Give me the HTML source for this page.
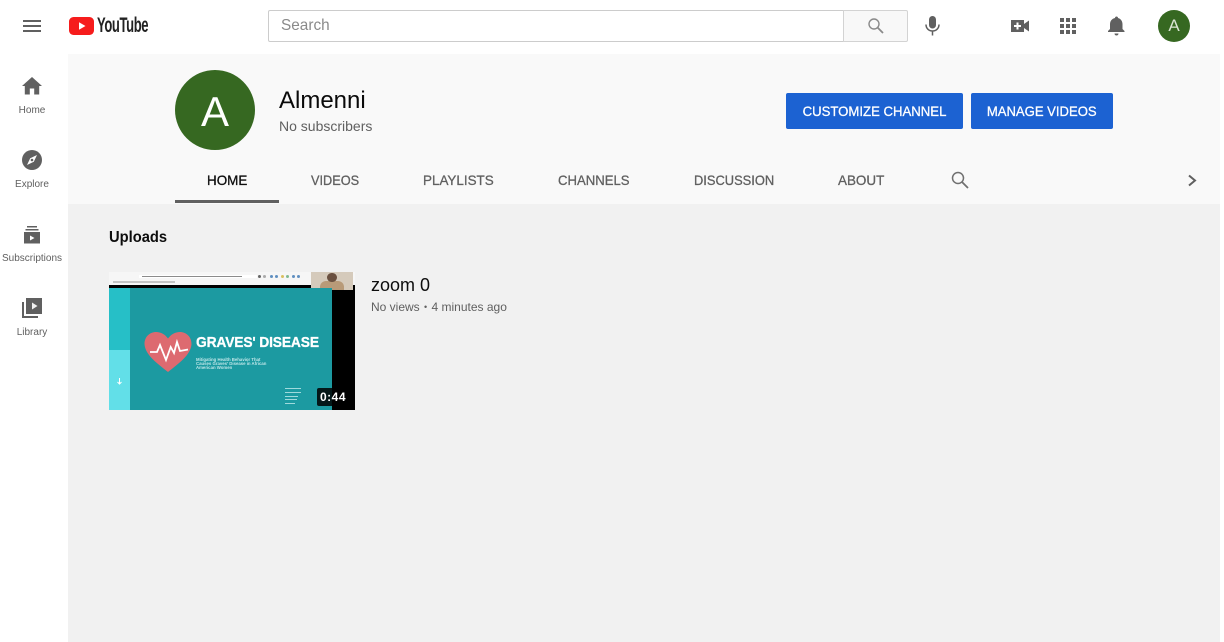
<!DOCTYPE html>
<html><head><meta charset="utf-8"><style>
html,body{margin:0;padding:0;width:1224px;height:642px;overflow:hidden;background:#fff;font-family:"Liberation Sans",sans-serif}
.a{position:absolute;white-space:nowrap}
svg{position:absolute;overflow:visible}
.side{color:#606060;font-size:10px;width:64px;left:0;text-align:center}
.tab{top:172px;font-size:14px;line-height:16px;color:#606060;-webkit-text-stroke:.3px currentColor;transform-origin:0 0}
.btn{background:#1c62d2;color:#fff;font-size:14px;height:36px;line-height:36px;top:93px;text-align:center;border-radius:2px}
.btn span{display:inline-block;-webkit-text-stroke:.3px #fff}
.dot{top:3px;width:3px;height:3px;border-radius:50%}
</style></head><body>
<div class="a" style="left:68px;top:54px;width:1152px;height:150px;background:#f9f9f9"></div>
<div class="a" style="left:68px;top:204px;width:1152px;height:438px;background:#f1f1f1"></div>

<svg style="left:23px;top:20px" width="18" height="12"><path d="M0 0h18v2H0zM0 5h18v2H0zM0 10h18v2H0z" fill="#606060"/></svg>
<svg style="left:69px;top:17px" width="25" height="18" viewBox="0 0 25 18"><rect width="25" height="18" rx="4.500" fill="#f61c1c"/><path d="M10 5.200L16.500 9 10 12.800z" fill="#fff"/></svg>
<div class="a" style="left:97px;top:14px;font-size:21px;line-height:24px;color:#222;font-weight:bold;transform:scaleX(.62);transform-origin:0 0;letter-spacing:-.6px">YouTube</div>

<div class="a" style="left:268px;top:10px;width:576px;height:32px;box-sizing:border-box;border:1px solid #ccc;border-radius:2px 0 0 2px;background:#fff"></div>
<div class="a" style="left:281px;top:16px;font-size:16px;line-height:20px;color:#8a8a8a;transform:scaleX(.96);transform-origin:0 0">Search</div>
<div class="a" style="left:843px;top:10px;width:65px;height:32px;box-sizing:border-box;border:1px solid #d3d3d3;border-radius:0 2px 2px 0;background:#f8f8f8"></div>
<svg style="left:868px;top:18px" width="16" height="16" fill="none" stroke="#8a8a8a"><circle cx="6" cy="6" r="5" stroke-width="1.400"/><path d="M9.800 9.800L15 15" stroke-width="1.800"/></svg>
<svg style="left:925px;top:16px" width="15" height="20" fill="none"><rect x="4" y="0" width="7" height="12.500" rx="3.500" fill="#606060"/><path d="M1 8.500c0 3.800 2.800 6.500 6.500 6.500s6.500-2.700 6.500-6.500M7.500 15v4.500" stroke="#606060" stroke-width="1.500"/></svg>

<svg style="left:1011px;top:20px" width="18" height="12"><path d="M0 0h13v4L18 .5v11L13 8v4H0z" fill="#606060"/><path d="M6.500 2.500v7M3 6h7" stroke="#fff" stroke-width="2"/></svg>
<svg style="left:1060px;top:18px" width="16" height="16" fill="#606060"><path d="M0 0h4v4H0zM6 0h4v4H6zM12 0h4v4h-4zM0 6h4v4H0zM6 6h4v4H6zM12 6h4v4h-4zM0 12h4v4H0zM6 12h4v4H6zM12 12h4v4h-4z"/></svg>
<svg style="left:1108px;top:16px" width="17" height="20" fill="#606060"><path d="M8.500 0.500c1 0 1.500.7 1.500 1.500 3 .8 4.500 3.300 4.500 6.500V13l2 2v1H0v-1l2-2V8.500C2 5.300 3.500 2.800 7 2c0-.8.500-1.500 1.500-1.500z"/><path d="M6.500 17.500h4c0 1.200-.9 2-2 2s-2-.8-2-2z"/></svg>
<div class="a" style="left:1158px;top:10px;width:32px;height:32px;border-radius:50%;background:#366821;color:#d9e4d3;font-size:17px;line-height:32px;text-align:center">A</div>

<svg style="left:22px;top:77px" width="20" height="18" fill="#606060"><path d="M10 0L20 9h-2.800v8.500h-5V11.500H7.800v6h-5V9H0z"/></svg>
<div class="a side" style="top:105px;line-height:12px">Home</div>
<svg style="left:22px;top:150px" width="20" height="20"><circle cx="10" cy="10" r="10" fill="#606060"/><path d="M15 5L11.800 11.800 5 15 8.200 8.200z" fill="#fff"/><circle cx="10" cy="10" r="1.300" fill="#606060"/></svg>
<div class="a side" style="top:179px;line-height:12px">Explore</div>
<svg style="left:24px;top:226px" width="16" height="18" fill="#606060"><path d="M3 0h10v1.500H3zM1.500 3h13v1.500h-13zM0 6h16v11.500H0z"/><path d="M6 9.500l4.500 2.500L6 14.500z" fill="#fff"/></svg>
<div class="a side" style="top:253px;line-height:12px">Subscriptions</div>
<svg style="left:22px;top:298px" width="20" height="20" fill="#606060"><path d="M4 0h16v16H4z"/><path d="M0 4h2v14h14v2H0z"/><path d="M10 4.500L15.500 8 10 11.500z" fill="#f1f1f1"/></svg>
<div class="a side" style="top:327px;line-height:12px">Library</div>

<div class="a" style="left:175px;top:70px;width:80px;height:80px;border-radius:50%;background:#366821"></div>
<div class="a" style="left:175px;top:72px;width:80px;height:80px;color:#fff;font-size:42px;line-height:80px;text-align:center">A</div>
<div class="a" style="left:279px;top:87px;font-size:24px;line-height:28px;color:#0a0a0a">Almenni</div>
<div class="a" style="left:279px;top:118px;font-size:14px;line-height:16px;color:#606060">No subscribers</div>
<div class="a btn" style="left:786px;width:177px"><span style="transform:scaleX(.94)">CUSTOMIZE CHANNEL</span></div>
<div class="a btn" style="left:971px;width:142px"><span style="transform:scaleX(.935)">MANAGE VIDEOS</span></div>

<div class="a tab" style="left:207px;color:#0d0d0d;transform:scaleX(.96)">HOME</div>
<div class="a" style="left:175px;top:200px;width:104px;height:3px;background:#606060"></div>
<div class="a tab" style="left:311px;transform:scaleX(.91)">VIDEOS</div>
<div class="a tab" style="left:423px;transform:scaleX(.96)">PLAYLISTS</div>
<div class="a tab" style="left:558px;transform:scaleX(.938)">CHANNELS</div>
<div class="a tab" style="left:694px;transform:scaleX(.92)">DISCUSSION</div>
<div class="a tab" style="left:838px;transform:scaleX(.96)">ABOUT</div>
<svg style="left:951px;top:171px" width="18" height="18" fill="none" stroke="#707070"><circle cx="7" cy="7" r="5.500" stroke-width="1.500"/><path d="M11 11L17 17" stroke-width="1.800"/></svg>
<svg style="left:1188px;top:175px" width="9" height="11" fill="none" stroke="#606060" stroke-width="2"><path d="M1 0.500L7 5.500 1 10.500"/></svg>

<div class="a" style="left:109px;top:228px;font-size:16px;line-height:20px;font-weight:bold;color:#0d0d0d;transform:scaleX(.92);transform-origin:0 0">Uploads</div>

<div class="a" style="left:109px;top:272px;width:246px;height:138px;background:#000;overflow:hidden">
<div class="a" style="left:0;top:0;width:246px;height:13px;background:#f6f6f6"></div>
<div class="a" style="left:30px;top:3px;width:118px;height:3px;background:#fff"></div>
<div class="a" style="left:33px;top:4px;width:100px;height:1px;background:#8b8b8b"></div>
<div class="a" style="left:4px;top:9px;width:62px;height:2px;background:#c4c4c4"></div>
<div class="a dot" style="left:149px;background:#666"></div>
<div class="a dot" style="left:154px;background:#aaa"></div>
<div class="a dot" style="left:161px;background:#5f8fc0"></div>
<div class="a dot" style="left:166px;background:#5f8fc0"></div>
<div class="a dot" style="left:172px;background:#d9c060"></div>
<div class="a dot" style="left:177px;background:#80b890"></div>
<div class="a dot" style="left:183px;background:#5f8fc0"></div>
<div class="a dot" style="left:188px;background:#5f8fc0"></div>
<div class="a" style="left:202px;top:0;width:42px;height:18px;background:#d5cabb"></div>
<div class="a" style="left:211px;top:9px;width:24px;height:9px;background:#b89a78;border-radius:6px 6px 0 0"></div>
<div class="a" style="left:218px;top:1px;width:10px;height:9px;background:#6a5040;border-radius:5px"></div>
<div class="a" style="left:0;top:16px;width:21px;height:62px;background:#26bfc7"></div>
<div class="a" style="left:0;top:78px;width:21px;height:60px;background:#62dfe8"></div>
<div class="a" style="left:21px;top:16px;width:202px;height:122px;background:#1c9aa1"></div>
<svg style="left:35px;top:60px" width="48" height="40"><path d="M24 40C14 32 1 23 .5 12 .5 4.500 6 0 12 0c5 0 9 2.500 12 6.500C27 2.500 31 0 36 0c6 0 11.500 4.500 11.500 12C47 23 34 32 24 40z" fill="#dd6a70"/><path d="M6 20h7l3-7 6 15 4.700-13 3.300 6 3-11 3 9 8-1.500" fill="none" stroke="#fff" stroke-width="1.800"/></svg>
<div class="a" style="left:87px;top:62px;font-size:15px;line-height:18px;font-weight:bold;color:#fff;letter-spacing:-.15px;transform:scaleX(.92);transform-origin:0 0;-webkit-text-stroke:.3px #fff">GRAVES' DISEASE</div>
<div class="a" style="left:87px;top:85px;font-size:4.300px;line-height:4px;font-weight:bold;color:#bfe6e8;margin-top:1px">Mitigating Health Behavior That<br>Causes Graves' Disease in African<br>American Women</div>
<div class="a" style="left:176px;top:116px;width:16px;height:1px;background:#9fdadc"></div>
<div class="a" style="left:176px;top:120px;width:16px;height:1px;background:#9fdadc"></div>
<div class="a" style="left:176px;top:124px;width:13px;height:1px;background:#9fdadc"></div>
<div class="a" style="left:176px;top:127px;width:12px;height:1px;background:#9fdadc"></div>
<div class="a" style="left:176px;top:131px;width:10px;height:1px;background:#9fdadc"></div>
<svg style="left:8px;top:106px" width="5" height="7" fill="none" stroke="#fff" stroke-width="1"><path d="M2.500 0v6M.5 4l2 2 2-2"/></svg>
<div class="a" style="left:208px;top:116px;width:32px;height:18px;background:rgba(0,0,0,.85);border-radius:2px;color:#fff;font-size:12px;line-height:18px;font-weight:bold;text-align:center;letter-spacing:.5px">0:44</div>
</div>

<div class="a" style="left:371px;top:275px;font-size:18px;line-height:20px;color:#0d0d0d">zoom 0</div>
<div class="a" style="left:371px;top:299px;font-size:12px;line-height:16px;color:#606060">No views <span style="font-size:9px;vertical-align:1px;margin:0 1px">•</span> 4 minutes ago</div>
</body></html>
